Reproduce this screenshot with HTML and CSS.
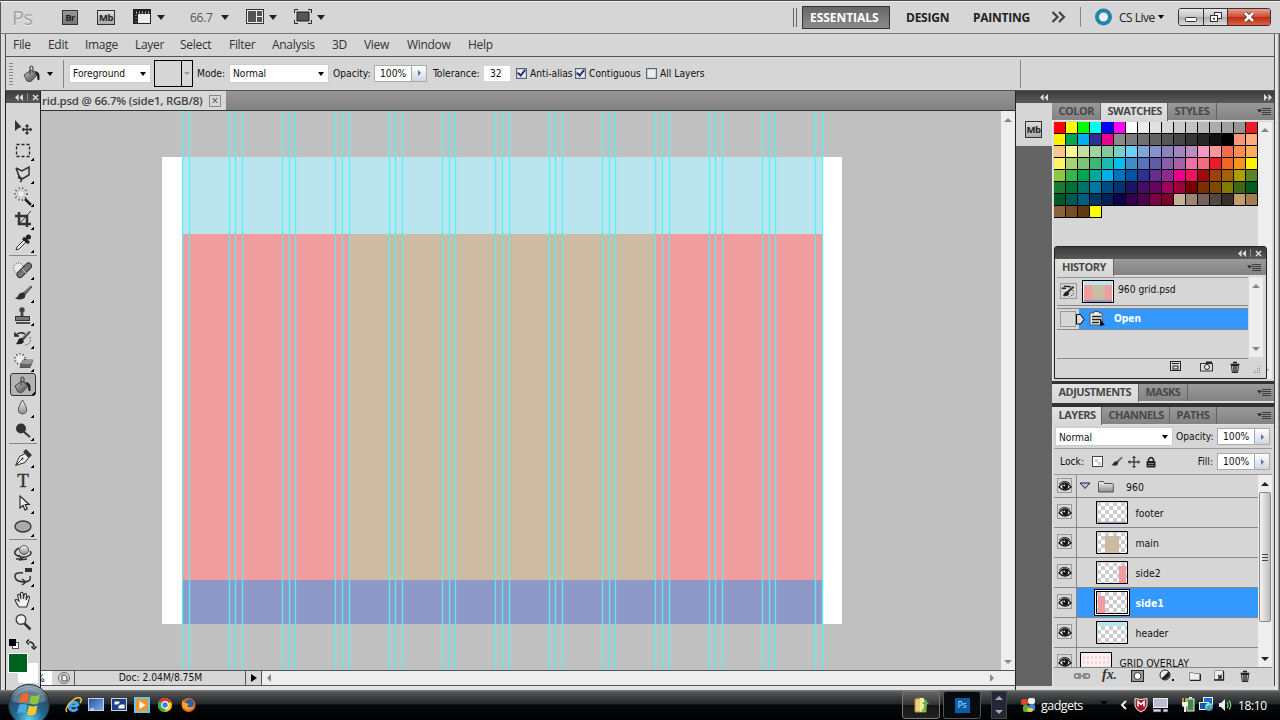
FILE: index.html
```html
<!DOCTYPE html>
<html lang="en">
<head>
<meta charset="utf-8">
<title>960 grid.psd</title>
<link rel="stylesheet" href="styles.css">
</head>
<body>
<svg class="defs" width="0" height="0">
  <defs>
    <linearGradient id="metal" x1="0" y1="0" x2="1" y2="1"><stop offset="0" stop-color="#c8c8c8"/><stop offset="1" stop-color="#444"/></linearGradient>
    <linearGradient id="lite" x1="0" y1="0" x2="0" y2="1"><stop offset="0" stop-color="#f4f4f4"/><stop offset="1" stop-color="#8c8c8c"/></linearGradient>
    <radialGradient id="orb" cx=".5" cy=".85" r=".8"><stop offset="0" stop-color="#5fd0ee"/><stop offset=".45" stop-color="#22658f"/><stop offset=".8" stop-color="#2b4b63"/><stop offset="1" stop-color="#8fa6b4"/></radialGradient>
    <radialGradient id="globe" cx=".4" cy=".3" r=".8"><stop offset="0" stop-color="#bff"/><stop offset="1" stop-color="#1668c8"/></radialGradient>
    <linearGradient id="screen" x1="0" y1="0" x2="1" y2="1"><stop offset="0" stop-color="#2a4f9c"/><stop offset="1" stop-color="#7db0ea"/></linearGradient>
    <pattern id="checker" width="8" height="8" patternUnits="userSpaceOnUse"><rect width="8" height="8" fill="#fff"/><path d="M0 0h4v4H0zM4 4h4v4H4z" fill="#ccc"/></pattern>
    <pattern id="dots" width="2" height="2" patternUnits="userSpaceOnUse"><rect width="1" height="1" fill="#888"/></pattern>
    <symbol id="bucket" viewBox="0 0 20 20"><path d="M2 11l7-5 6 5-6 6.500-4-.5z" fill="url(#metal)" stroke="#444"/><path d="M8 10V4q0-2 1.500-2T11 4v4" fill="none" stroke="#444" stroke-width="1.200"/><path d="M12 7q5 0 5.500 4.500v4q-1.500 1.500-2.200-.5L15 11z" fill="#222"/></symbol>
    <symbol id="brush" viewBox="0 0 20 20"><path d="M18 3l-8 7 2 2 7-8z" fill="#777" stroke="#333" stroke-width=".7"/><path d="M10.500 9.500q-4-.5-5 2.500-1 2.500-3.500 3.500 6.500 2 9.500-.5 1.500-1.500.5-4z" fill="#2e2e2e"/></symbol>
    <symbol id="eye" viewBox="0 0 14 12"><path d="M1 7q5.500-8 12 0Q7 13 1 7z" fill="#eee" stroke="#111" stroke-width="1.300"/><circle cx="7.200" cy="6.400" r="2.900" fill="#111"/><circle cx="6.300" cy="5.400" r=".9" fill="#ddd"/><path d="M1 4q5-5 11-.5" fill="none" stroke="#333" stroke-width="1"/></symbol>
    <symbol id="trash" viewBox="0 0 12 12"><path d="M2.500 4.500h7l-.8 7H3.300z" fill="#ccc" stroke="#222"/><path d="M1.500 3.500h9M4 1.500h4M5 5v6M7 5v6" stroke="#222" stroke-width="1.300"/></symbol>
    <symbol id="rewind" viewBox="0 0 8 7"><path d="M3.600 0v7L0 3.500zM8 0v7L4.400 3.500z" fill="#ddd"/></symbol>
    <symbol id="flyout" viewBox="0 0 14 9"><path d="M0 2.500h5L2.500 5.500z" fill="#222"/><path d="M5 1.500h9M5 3.500h9M5 5.500h9M5 7.500h9" stroke="#333" stroke-width=".9"/></symbol>
  </defs>
</svg>

<div class="screen">
  <header class="appbar">
    <span class="logo">Ps</span>
    <span class="badge badge-br">Br</span>
    <span class="badge badge-mb">Mb</span>
    <svg width="20" height="16"><rect x=".5" y=".5" width="17" height="14" fill="#eee" stroke="#222"/><path d="M1 1h16v4H5v10H1z" fill="#222"/><path d="M3 3.500h13" stroke="#bbb" stroke-dasharray="1 2" stroke-width="2"/><path d="M3 6v9" stroke="#bbb" stroke-dasharray="1 2"/></svg>
    <i class="caret"></i>
    <span class="zoomval">66.7</span>
    <i class="caret"></i>
    <svg width="20" height="16"><rect x=".5" y=".5" width="17" height="14" fill="#eee" stroke="#333"/><path d="M2 2h8v11H2zM11 2h5v5h-5zM11 8h5v5h-5z" fill="#555"/></svg>
    <i class="caret"></i>
    <svg width="20" height="16"><path d="M.5 4V.5H4M14 .5h3.500V4M17.500 11v3.500H14M4 14.500H.5V11" fill="none" stroke="#222"/><rect x="3" y="3" width="12" height="9" fill="#555" stroke="#222"/></svg>
    <i class="caret"></i>
    <i class="dblrule"></i>
    <b class="ws ws-on">ESSENTIALS</b>
    <b class="ws">DESIGN</b>
    <b class="ws">PAINTING</b>
    <svg width="16" height="12"><path d="M1.500 1l5 5-5 5M8 1l5 5-5 5" fill="none" stroke="#444" stroke-width="2.200"/></svg>
    <i class="rule"></i>
    <svg width="20" height="20"><circle cx="9.500" cy="10" r="6.500" fill="#e8f4f8" stroke="#2484ab" stroke-width="4"/></svg>
    <span class="cslive">CS Live</span>
    <i class="caret small"></i>
    <div class="winbtns">
      <span><svg width="14" height="12"><rect x="1.500" y="6.500" width="11" height="4" rx="1" fill="#fff" stroke="#333"/></svg></span>
      <span><svg width="14" height="12"><rect x="5.500" y="1.500" width="7" height="6" fill="#fff" stroke="#333"/><rect x="1.500" y="4.500" width="7" height="6" fill="#fff" stroke="#333"/><rect x="4" y="7" width="2" height="1.500" fill="#333"/></svg></span>
      <span class="close"><svg width="14" height="12"><path d="M3 2l8 8M11 2l-8 8" stroke="#633" stroke-width="4.500"/><path d="M3 2l8 8M11 2l-8 8" stroke="#fff" stroke-width="2.600"/></svg></span>
    </div>
  </header>

  <nav class="menubar">
    <span>File</span><span>Edit</span><span>Image</span><span>Layer</span><span>Select</span><span>Filter</span><span>Analysis</span><span>3D</span><span>View</span><span>Window</span><span>Help</span>
  </nav>

  <div class="options">
    <i class="vgrip"></i>
    <svg width="20" height="20"><use href="#bucket"/></svg>
    <i class="caret small"></i>
    <i class="rule"></i>
    <span class="select w80">Foreground<i class="caret small"></i></span>
    <span class="pattern"><i></i><em></em></span>
    <span>Mode:</span>
    <span class="select w98">Normal<i class="caret small"></i></span>
    <span>Opacity:</span>
    <span class="num">100%<i></i></span>
    <span>Tolerance:</span>
    <span class="field">32</span>
    <i class="check on"></i><span>Anti-alias</span>
    <i class="check on"></i><span>Contiguous</span>
    <i class="check"></i><span>All Layers</span>
    <i class="rule last"></i>
  </div>

  <main class="work">
    <aside class="tools">
      <div class="dark"><svg width="8" height="7"><use href="#rewind"/></svg><i></i><svg width="7" height="7"><path d="M1 1l5 5M6 1L1 6" stroke="#ddd" stroke-width="1.500"/></svg></div>
      <i class="hgrip"></i>
      <div class="toolset">
        <div class="tool nomore"><svg viewBox="0 0 20 20"><path d="M2 2v11l3-2.500L8.500 9z" fill="#333"/><path d="M14 7v9M9.500 11.500h9M12.500 8.500L14 7l1.500 1.500M12.500 14.500L14 16l1.500-1.500M11 10l-1.500 1.500L11 13M17 10l1.500 1.500L17 13" fill="none" stroke="#333" stroke-width="1.300"/></svg></div>
        <div class="tool"><svg viewBox="0 0 20 20"><rect x="3.500" y="3.500" width="13" height="12" fill="none" stroke="#222" stroke-width="1.300" stroke-dasharray="3 2"/></svg></div>
        <div class="tool"><svg viewBox="0 0 20 20"><path d="M3 4l6 3 7-4v8l-7 4-3-3-3-8M7 12q-3 1 0 2.500T7 18" fill="none" stroke="#333" stroke-width="1.500"/></svg></div>
        <div class="tool"><svg viewBox="0 0 20 20"><circle cx="8" cy="7" r="3.500" fill="#eee" stroke="#bbb"/><circle cx="8" cy="7" r="6" fill="none" stroke="#444" stroke-width="2" stroke-dasharray="1 2.600"/><path d="M12 12l6 6" stroke="#222" stroke-width="2.500"/></svg></div>
        <div class="tool"><svg viewBox="0 0 20 20"><path d="M2 6h12v11M6 2v12h12" fill="none" stroke="#333" stroke-width="2.500"/><path d="M7 13L18 1" stroke="#333"/></svg></div>
        <div class="tool"><svg viewBox="0 0 20 20"><path d="M3 17l1-3 7-7 2 2-7 7z" fill="#eee" stroke="#333"/><path d="M10 5l6 5M12 7l4-4" stroke="#222" stroke-width="3"/><circle cx="15.500" cy="4" r="2.500" fill="#222"/></svg></div>
        <hr>
        <div class="tool"><svg viewBox="0 0 20 20"><circle cx="5.500" cy="8" r="5" fill="#e8e8e8" stroke="#333" stroke-dasharray="1 1.500"/><path d="M7 14.500l8.500-8.500" stroke="#333" stroke-width="7" stroke-linecap="round"/><path d="M7 14.500l8.500-8.500" stroke="#777" stroke-width="5" stroke-linecap="round"/><path d="M9 9l4 4" stroke="#ccc"/></svg></div>
        <div class="tool"><svg viewBox="0 0 20 20"><use href="#brush"/></svg></div>
        <div class="tool"><svg viewBox="0 0 20 20"><circle cx="9" cy="4" r="2.700" fill="#444"/><path d="M8 5h2l.7 6H7.300z" fill="#444"/><rect x="2.500" y="10.500" width="14" height="4" fill="#777" stroke="#333"/><path d="M3 17h14" stroke="#222" stroke-width="1.500"/></svg></div>
        <div class="tool"><svg viewBox="0 0 20 20"><path d="M16 2L8 10l2 2 8-9z" fill="#555"/><path d="M9 9q-4 0-4 3l-2 3q6 1 8-2z" fill="#222"/><path d="M3 6q4-4 9-1M2 3.500V7h4" fill="none" stroke="#222" stroke-width="1.600"/><path d="M17 8q2 8-6 8" fill="none" stroke="#444" stroke-dasharray="1.500 1.500"/></svg></div>
        <div class="tool"><svg viewBox="0 0 20 20"><circle cx="7" cy="7" r="5" fill="#eee" stroke="#444" stroke-width="2" stroke-dasharray="1 2.200"/><path d="M10 8h10l-3 7.500H7z" fill="#666" stroke="#333" stroke-width=".7"/><path d="M10 8h10l-2 4H8.500z" fill="#999"/></svg></div>
        <div class="tool picked"><svg viewBox="0 0 20 20"><use href="#bucket"/></svg></div>
        <div class="tool"><svg viewBox="0 0 20 20"><path d="M9.500 2q-8.500 13 0 14 8.500-1 0-14z" fill="url(#lite)" stroke="#555"/></svg></div>
        <div class="tool"><svg viewBox="0 0 20 20"><circle cx="8" cy="7.500" r="5" fill="#333"/><path d="M11 11l6 5" stroke="#333" stroke-width="2"/></svg></div>
        <hr>
        <div class="tool"><svg viewBox="0 0 20 20"><path d="M2.500 17.500l4-9 6-3 3 4-3.500 5z" fill="#eee" stroke="#333"/><path d="M3 17l6-6" stroke="#333"/><circle cx="9.500" cy="10.500" r="1" fill="#222"/><path d="M11.500 2.500l6 6" stroke="#333" stroke-width="4"/></svg></div>
        <div class="tool type">T</div>
        <div class="tool"><svg viewBox="0 0 20 20"><path d="M7 2v12l3-2.500 2 4.500 2.200-1-2-4.500h4z" fill="#eee" stroke="#222" stroke-width="1.100"/></svg></div>
        <div class="tool"><svg viewBox="0 0 20 20"><ellipse cx="10" cy="9.500" rx="8" ry="5.500" fill="#aaa" stroke="#333" stroke-width="1.300"/></svg></div>
        <hr>
        <div class="tool"><svg viewBox="0 0 20 20"><path d="M6 4Q-2 9 5 12t12-1q2-2 0-4M3 15h6l-3-4M6 16l8-1" fill="none" stroke="#333" stroke-width="1.500"/><circle cx="11" cy="6" r="4.500" fill="url(#lite)" stroke="#555"/></svg></div>
        <div class="tool"><svg viewBox="0 0 20 20"><path d="M10 6Q1 5 2 10t10 5q7-1 5-6M9 12l4 3-4 3" fill="none" stroke="#333" stroke-width="1.500"/><path d="M12 1h7v4h-7z" fill="#333"/></svg></div>
        <div class="tool"><svg viewBox="0 0 20 20"><path d="M6 17q-3-4-4-7 1-1.500 4 1L4.500 5Q6 3.500 7 5l1 4-.5-6q1.500-1.500 2.500 0l.5 6 .8-5q1.500-1 2.200.5L13 10l2-4q1.500 0 1.500 1.500-1 5-3 9.500z" fill="#f2f2f2" stroke="#333" stroke-width="1.100"/></svg></div>
        <div class="tool nomore"><svg viewBox="0 0 20 20"><circle cx="8" cy="6.500" r="4.800" fill="#eee" stroke="#444" stroke-width="1.400"/><path d="M11.500 10.500l6 6" stroke="#333" stroke-width="2.500"/></svg></div>
      </div>
      <div class="minis"><svg width="10" height="10"><rect x="3.500" y="3.500" width="6" height="6" fill="#fff" stroke="#555"/><rect width="7" height="7" fill="#000"/></svg><svg width="11" height="11"><path d="M3 3q5 0 5 5M3 .5L.5 3 3 5.500M5.500 7.500L8 10l2.500-2.500" fill="none" stroke="#222" stroke-width="1.500"/></svg></div>
      <div class="colors"><i class="bg"></i><i class="fg"></i></div>
    </aside>

    <section class="doc">
      <div class="tabstrip"><div class="doctab"><span>rid.psd @ 66.7% (side1, RGB/8)</span><i>×</i></div></div>
      <div class="canvasrow">
        <svg class="canvas" width="960" height="559" viewBox="41 111 960 559">
          <rect x="41" y="111" width="960" height="559" fill="#c0c0c0"/>
          <rect x="162" y="157" width="680" height="467" fill="#fff"/>
          <rect x="182" y="157" width="641" height="77" fill="#bae5ee"/>
          <rect x="182" y="234" width="641" height="346" fill="#f19c9f"/>
          <rect x="349" y="234" width="306" height="346" fill="#cdbba3"/>
          <rect x="182" y="580" width="641" height="44" fill="#8e99c8"/>
          <g id="guides" fill="#50f2f4" fill-opacity=".95"></g>
        </svg>
        <div class="vscroll"><i class="up"></i><i class="down"></i></div>
      </div>
      <div class="status">
        <span class="pct">%</span>
        <svg width="12" height="12"><circle cx="6" cy="6" r="5.500" fill="#ddd" stroke="#666"/><path d="M4 3h3l2 2v4H4z" fill="#eee" stroke="#444"/></svg>
        <span class="docsize">Doc: 2.04M/8.75M</span>
        <span class="play"></span>
        <div class="hscroll"><i class="left"></i><i class="right"></i></div>
      </div>
    </section>

    <section class="dock">
      <div class="dark dockhead"><svg width="8" height="7"><use href="#rewind"/></svg><svg class="flip" width="8" height="7"><use href="#rewind"/></svg></div>
      <div class="dockbody">
        <div class="rail"><div class="railbox"><i class="hgrip"></i><span class="badge badge-mb">Mb</span></div></div>
        <div class="panels">
          <section class="panel colorpanel">
            <div class="tabs"><b>COLOR</b><b class="on">SWATCHES</b><b>STYLES</b><svg width="14" height="9"><use href="#flyout"/></svg></div>
            <div class="swatcharea"><div class="swatches" id="swatches"></div><div class="pscroll"><i class="up"></i><i class="down"></i></div></div>
          </section>
          <section class="panel adj">
            <div class="tabs"><b class="on">ADJUSTMENTS</b><b>MASKS</b><svg width="14" height="9"><use href="#flyout"/></svg></div>
          </section>
          <section class="panel layers">
            <div class="tabs"><b class="on">LAYERS</b><b>CHANNELS</b><b>PATHS</b><svg width="14" height="9"><use href="#flyout"/></svg></div>
            <div class="lrow blend"><span class="select">Normal<i class="caret small"></i></span><span class="lab">Opacity:</span><span class="num">100%<i></i></span></div>
            <div class="lrow lock"><span>Lock:</span>
              <svg width="12" height="12"><rect x=".5" y=".5" width="10" height="10" fill="#fff" stroke="#444"/><path d="M3 3h3v3H3zM6 6h3v3H6z" fill="#ccc"/></svg>
              <svg width="13" height="13"><use href="#brush"/></svg>
              <svg width="12" height="12"><path d="M6 .5v11M.5 6h11M4.500 2L6 .5 7.500 2M4.500 10L6 11.500 7.500 10M2 4.500L.5 6 2 7.500M10 4.500L11.500 6 10 7.500" fill="none" stroke="#111"/></svg>
              <svg width="10" height="12"><path d="M2.500 6V3.500q2.500-4 5 0V6" fill="none" stroke="#222" stroke-width="1.500"/><rect x=".5" y="5" width="9" height="6.500" rx="1" fill="#222"/><path d="M2 7.500h6M2 9.500h6" stroke="#777"/></svg>
              <span class="lab">Fill:</span><span class="num">100%<i></i></span></div>
            <div class="llist">
              <div class="lrows">
                <div class="layer group"><span class="eye"><svg width="14" height="12"><use href="#eye"/></svg></span><svg class="tri" width="12" height="8"><path d="M1 1h10L6 6.500z" fill="#b9b9f0" stroke="#223"/></svg><svg class="folder" width="16" height="13"><path d="M.5 12V2.500q0-1 1-1h4l1 2h8q.8 0 .8 1V12z" fill="url(#lite)" stroke="#555"/></svg><span>960</span></div>
                <div class="layer"><span class="eye"><svg width="14" height="12"><use href="#eye"/></svg></span><svg class="thumb" width="32" height="23"><rect x="1" y="1" width="30" height="21" fill="url(#checker)"/><path d="M1 20.500h28" stroke="#8e99c8" stroke-width="1.500"/></svg><span>footer</span></div>
                <div class="layer"><span class="eye"><svg width="14" height="12"><use href="#eye"/></svg></span><svg class="thumb" width="32" height="23"><rect x="1" y="1" width="30" height="21" fill="url(#checker)"/><rect x="8" y="4" width="14" height="17" fill="#cdbba3"/></svg><span>main</span></div>
                <div class="layer"><span class="eye"><svg width="14" height="12"><use href="#eye"/></svg></span><svg class="thumb" width="32" height="23"><rect x="1" y="1" width="30" height="21" fill="url(#checker)"/><rect x="22" y="4" width="7" height="17" fill="#f19c9f"/></svg><span>side2</span></div>
                <div class="layer active"><span class="eye"><svg width="14" height="12"><use href="#eye"/></svg></span><svg class="thumb" width="32" height="23"><rect x="0" y="0" width="30" height="21" fill="url(#checker)"/><rect x="1" y="4" width="7" height="17" fill="#f19c9f"/></svg><b>side1</b></div>
                <div class="layer"><span class="eye"><svg width="14" height="12"><use href="#eye"/></svg></span><svg class="thumb" width="32" height="23"><rect x="1" y="1" width="30" height="21" fill="url(#checker)"/><rect x="1" y="0" width="28" height="4" fill="#bae5ee"/></svg><span>header</span></div>
                <div class="layer base"><span class="eye"><svg width="14" height="12"><use href="#eye"/></svg></span><svg class="thumb" width="32" height="23"><rect width="30" height="21" fill="#fdf0ee"/><path d="M3 3v18M7 3v18M11 3v18M15 3v18M19 3v18M23 3v18M27 3v18" stroke="#eebcbc" stroke-dasharray="3 2"/></svg><span>GRID OVERLAY</span></div>
              </div>
              <div class="lscroll"><i class="up"></i><i class="knob"></i><i class="down"></i></div>
            </div>
            <div class="lfoot">
              <svg width="18" height="10"><path d="M8 3H3.500a2 2 0 000 4H8M10 3h4.500a2 2 0 010 4H10M5 5h8" fill="none" stroke="#777" stroke-width="1.400"/></svg>
              <span class="fx">fx<small>.</small></span>
              <svg width="14" height="12"><rect x=".5" y=".5" width="12" height="11" fill="#999" stroke="#222"/><circle cx="6.500" cy="6" r="3.500" fill="#fff" stroke="#333"/></svg>
              <svg width="16" height="13"><circle cx="6" cy="6" r="5" fill="#eee" stroke="#222"/><path d="M9.500 2.500a5 5 0 01-7 7z" fill="#222"/><path d="M13 10h2v2h-2z" fill="#111"/></svg>
              <svg width="12" height="10"><path d="M.5 9V1.500H4l1 1h5.500V9z" fill="#eee" stroke="#888"/><path d="M1 9.500h10.500V3" fill="none" stroke="#222"/></svg>
              <svg width="11" height="11"><path d="M.5.5h9v9h-9z" fill="#eee" stroke="#999"/><path d="M0 10h9.500V1M4 8h3V4.500M4 5l3 3" fill="none" stroke="#222" stroke-width="1.300"/></svg>
              <svg width="12" height="12"><use href="#trash"/></svg>
            </div>
          </section>
        </div>
      </div>
    </section>

    <section class="history">
      <div class="dark"><svg width="8" height="7"><use href="#rewind"/></svg><i></i><svg width="7" height="7"><path d="M1 1l5 5M6 1L1 6" stroke="#ddd" stroke-width="1.500"/></svg></div>
      <div class="tabs"><b class="on">HISTORY</b><svg width="14" height="9"><use href="#flyout"/></svg></div>
      <div class="hbody">
        <div class="hlist">
          <div class="snap"><span class="slot"><svg width="14" height="14" viewBox="0 0 20 20"><path d="M18 4L9 12" stroke="#333" stroke-width="3"/><path d="M10 11q-5-1-7 6 6 2 9-3z" fill="#222"/><path d="M1 6h6M4 3l10 1" stroke="#222" stroke-width="2" fill="none"/><path d="M17 9l1 6-6 3" stroke="#444" stroke-width="1.500" fill="none" stroke-dasharray="2 2"/></svg></span><svg width="32" height="23"><rect width="32" height="23" fill="#000"/><rect x="1" y="1" width="30" height="21" fill="#fff"/><rect x="2" y="1" width="28" height="4" fill="#bae5ee"/><rect x="2" y="5" width="28" height="15" fill="#f19c9f"/><rect x="10" y="5" width="13" height="15" fill="#cdbba3"/><rect x="2" y="20" width="28" height="2" fill="#8e99c8"/></svg><span class="snapname">960 grid.psd</span></div>
          <div class="state"><span class="slot"></span><div class="bar"><svg class="mark" width="9" height="11"><path d="M.5.5h4L8 5.500 4.500 10h-4z" fill="#ddd" stroke="#000"/></svg><svg width="17" height="16"><path d="M1 2h4V.5h5V2h3v12H1z" fill="#eee" stroke="#555"/><path d="M3 5.500h9M3 8.500h9M3 11.500h7" stroke="#222" stroke-width="1.300"/><path d="M11 8v7l5-1z" fill="#111"/></svg><b>Open</b></div></div>
        </div>
        <div class="pscroll"><i class="up"></i><i class="down"></i></div>
      </div>
      <div class="hfoot">
        <svg width="12" height="11"><rect x=".5" y=".5" width="10" height="9" fill="#ddd" stroke="#222"/><path d="M2 2.500h7" stroke="#222"/><rect x="3" y="5" width="5" height="3" fill="none" stroke="#222"/></svg>
        <svg width="14" height="11"><rect x=".5" y="2.500" width="12" height="7.500" fill="#ddd" stroke="#333"/><circle cx="7" cy="6" r="2.500" fill="#eee" stroke="#222"/><path d="M6 1.500h6" stroke="#222" stroke-width="2"/></svg>
        <svg width="12" height="12"><use href="#trash"/></svg>
        <svg class="grow" width="10" height="10"><path d="M10 0v10H0z" fill="url(#dots)"/></svg>
      </div>
    </section>
  </main>

  <footer class="taskbar">
    <svg class="orb" width="44" height="36"><circle cx="22" cy="21" r="20.500" fill="url(#orb)" stroke="#1a2b36"/><path d="M5 17a17.500 17.500 0 0134 0q-17 6-34 0z" fill="#fff" opacity=".25"/><path d="M14 11q4-3 8-1l-1.500 9q-4-2-8.500 0z" fill="#ef6a2a"/><path d="M24 11q4 2 9-.5L31 19.500q-4 2-8.500-.5z" fill="#8cc63e"/><path d="M12 21q4-2 8.500 0L18.500 29.500q-4-2-8.500.5z" fill="#4aa8e0"/><path d="M22 21.500q4 2 8.500 0L28.500 30q-4 2.500-8.500.5z" fill="#fbc92e"/></svg>
    <svg width="17" height="17"><path d="M13 9H4a4.500 4.500 0 008.300 2.500M4 9a4.700 4.700 0 019.200 0" fill="none" stroke="#43a7ee" stroke-width="3"/><path d="M2 15Q-1 12 6 5t10-3q1 1-1 4" fill="none" stroke="#f5c23c" stroke-width="1.500"/></svg>
    <svg width="17" height="14"><rect x=".5" y=".5" width="15" height="12" fill="url(#screen)" stroke="#c8d4e4"/><path d="M2 11h4" stroke="#fff"/></svg>
    <svg width="17" height="14"><rect x=".5" y=".5" width="15" height="12" fill="#1f3f86" stroke="#c8d4e4"/><path d="M3 3h6v4H3zM7 6h7v5H7z" fill="#fff" stroke="#1f3f86"/></svg>
    <svg width="17" height="16"><rect x="1" y="1" width="14" height="14" fill="#f4952a" stroke="#67c4ef" stroke-width="2"/><path d="M5.500 4v8l6-4z" fill="#fff"/></svg>
    <svg width="17" height="16"><circle cx="8" cy="8" r="7" fill="#f8c81c"/><path d="M8 8L1.900 4.500a7 7 0 0112.200 0z" fill="#e0392b"/><path d="M1.900 4.500a7 7 0 005.500 10.500L10 9z" fill="#3aa648"/><circle cx="8" cy="8" r="3.300" fill="#3c7fe0" stroke="#fff" stroke-width="1.200"/></svg>
    <svg width="17" height="16"><circle cx="8.500" cy="8" r="7" fill="#e66a12"/><circle cx="9.500" cy="6.500" r="4.300" fill="#2c5fae"/><path d="M2 2q0 3 4 4l3 1-2 2q3 3 6 0-1 4-5 4-5-1-6-6z" fill="#f6a42a"/></svg>
    <span class="tbtn t1"><svg width="18" height="18"><path d="M3 3l6-1v2h5v12l-11 0z" fill="#e8d27a" stroke="#a98f35"/><path d="M8 2h4v14H8z" fill="#f5e9a6"/><path d="M9 15q4-2 3-7h-2l3.500-4L17 8h-2q0 6-4 8z" fill="#55b848"/></svg></span>
    <span class="tbtn t2"><i>Ps</i></span>
    <span class="spin"><i class="up"></i><i class="down"></i></span>
    <svg class="gad" width="16" height="16"><rect x="1" y="2" width="7" height="6" rx="2" fill="#d9442e"/><rect x="8" y="1" width="7" height="6" rx="2" fill="#f0f0e8"/><rect x="3" y="8" width="6" height="7" rx="2" fill="#45b04a"/><rect x="9" y="7" width="6" height="7" rx="2" fill="#3f86e0"/><rect x="7" y="11" width="6" height="4" rx="2" fill="#f3cf35"/></svg>
    <span class="gt">gadgets</span>
    <i class="blk"></i>
    <svg class="chev" width="8" height="10"><path d="M6 1L2 5l4 4" fill="none" stroke="#eee" stroke-width="2"/></svg>
    <svg class="tr" width="14" height="16"><path d="M1 1.500l6 1 6-1V9q-1 4-6 6-5-2-6-6z" fill="#a8182b" stroke="#eee"/><path d="M4 9.500V4.500l3 3 3-3v5" fill="none" stroke="#fff" stroke-width="1.500"/></svg>
    <svg class="tr2" width="16" height="15"><rect x=".5" y=".5" width="14" height="9" fill="#bcbcd0" stroke="#eee"/><path d="M0 11h8v3H0zM10 11h5v3h-5z" fill="#ddd" stroke="#224" stroke-width=".7"/></svg>
    <svg class="tr3" width="15" height="16"><rect x="6" y="2" width="7" height="12" fill="#3f8a46" stroke="#eee"/><path d="M8 .5h3" stroke="#fff" stroke-width="2"/><path d="M1 5h6v3q-1 2-2 2v5H3v-5Q1 10 1 8z" fill="#eee"/><path d="M2 1v4M5 1v4" stroke="#e5b93c" stroke-width="1.500"/></svg>
    <svg class="tr4" width="16" height="16"><rect x="4.500" y=".5" width="9" height="7" fill="#1f6fc8" stroke="#dff"/><rect x=".5" y="5.500" width="9" height="7" fill="#1b56a8" stroke="#dff"/><circle cx="10" cy="10" r="4" fill="url(#globe)"/><path d="M8 9q2-2 3 0l1 2-3 2z" fill="#3cae4a"/></svg>
    <svg class="tr5" width="15" height="14"><path d="M1 5h2l4-4v12L3 9H1z" fill="#eee"/><path d="M9 4q2 3 0 6M11 2.500q3.500 4.500 0 9" fill="none" stroke="#6fd07a" stroke-width="1.300"/></svg>
    <span class="clock">18:10</span>
  </footer>
</div>
<script src="script.js"></script>
</body>
</html>
```
FILE: styles.css
```css
*{box-sizing:border-box}
body{margin:0;width:1280px;height:720px;overflow:hidden;background:#dcdcdc;font-family:"DejaVu Sans Condensed","DejaVu Sans",sans-serif;font-stretch:condensed;font-size:10.200px;color:#111}
.defs{position:absolute}
i,em{font-style:normal;display:block}
svg{display:block;flex:none}
.screen{width:1280px;height:720px;display:flex;flex-direction:column;background:linear-gradient(90deg,#555 1px,#e2e2e2 1px,#d4d4d4 5px,transparent 5px,transparent 1275px,#e8e8e8 1275px,#ddd 1278px,#555 1279px)}
.caret{width:0;height:0;border:4px solid transparent;border-top:5px solid #222;border-bottom:0}
.caret.small{border-width:4px 3.500px 0;border-top-color:#000}
.rule{width:1px;height:28px;background:#888}

.appbar{height:34px;flex:none;border-top:1px solid #4a464a;border-bottom:1px solid #777;background:#d6d6d6;box-shadow:inset 0 1px #eee,inset 1px 0 #555;display:grid;align-items:center;padding-left:12px;
grid-template-columns:50px 35px 36px 24px 33px 31px 25px 23px 25px 23px 24px 456px 93px 67px 94px 29px 14px 25px 39px 20px 93px}
.logo{font:20px "Open Sans",sans-serif;color:#a2a2a2;letter-spacing:-.5px;text-shadow:0 1px #eee}
.badge{display:block;width:16px;height:15px;border:1px solid #333;font:700 9.500px/13px "Open Sans",sans-serif;text-align:center;letter-spacing:-.5px;color:#222;background:linear-gradient(#999,#777)}
.badge-mb{width:18px;background:linear-gradient(#ddd,#aaa)}
.zoomval{font:12px "Open Sans",sans-serif;color:#555;letter-spacing:-.3px}
.dblrule{justify-self:end;width:4px;height:19px;border:solid #666;border-width:0 1px}
.ws{font:700 12px/21px "Open Sans",sans-serif;letter-spacing:-.25px;padding-left:16px;white-space:nowrap;color:#222}
.ws-on{color:#fff;background:linear-gradient(#666,#8c8c8c);border:1px solid #333;height:23px;width:88px;padding:0 0 0 7px;justify-self:end;letter-spacing:-.05px}
.appbar .rule{height:20px}
.cslive{font:12px "Open Sans",sans-serif;letter-spacing:-.5px;white-space:nowrap;color:#222}
.winbtns{display:flex;width:93px;height:18px;border:1px solid #333;border-radius:3px;overflow:hidden}
.winbtns span{width:25px;border-right:1px solid #333;background:linear-gradient(#e6e6e6,#c8c8c8 48%,#aaa 50%,#ddd);display:grid;place-items:center}
.winbtns .close{width:42px;border:0;background:linear-gradient(#e8a090,#cf4c38 48%,#b52a18 50%,#e06040)}

.menubar{margin:0 5px;height:23px;flex:none;border:solid #555;border-width:0 1px 1px;background:#d6d6d6;display:grid;grid-template-columns:35px 37px 50px 45px 49px 43px 60px 32px 43px 61px 60px;padding-left:7px;font:12px/21px "Open Sans",sans-serif;letter-spacing:-.3px;color:#333}

.options{margin:0 5px;height:34px;flex:none;border:solid #555;border-width:0 1px 1px;background:#d6d6d6;display:grid;align-items:center;padding-left:3px;white-space:nowrap;
grid-template-columns:13px 25px 16px 7px 84px 43px 33px 103px 41px 59px 51px 32px 14px 45px 14px 57px 14px 360px 2px}
.options>span,.options .check{position:relative;top:-.5px}
.vgrip{width:4px;height:24px;background:radial-gradient(#888 40%,transparent 50%) 0 0/2px 3px}
.select{background:#fff;height:17px;display:flex;align-items:center;justify-content:space-between;padding:1px 4px 0 3px;box-shadow:0 0 0 1px #ccc;flex:none}
.w80{width:80px}.w98{width:98px}
.pattern{width:39px;height:27px;border:1px solid #000;display:flex;align-items:center}
.pattern i{width:27px;height:25px;border-right:1px solid #000}
.pattern em{margin-left:2px;border:3px solid transparent;border-top-color:#999;border-bottom:0}
.num{width:53px;height:17px;display:flex;flex:none;background:#fff;border:1px solid #aaa;line-height:15px;padding-left:5px;justify-content:space-between}
.num i{width:15px;background:linear-gradient(#fff,#cfd6e2);border-left:1px solid #aaa;display:grid;place-items:center}
.num i::after{content:"";border:3px solid transparent;border-left-color:#57719c;border-right:0}
.field{width:26px;height:15px;background:#fff;padding-left:6px;line-height:15px}
.check{width:11px;height:11px;background:#eee;border:1px solid #567;box-shadow:inset 0 0 0 1px #ccc}
.check.on{display:grid;place-items:center}
.check.on::after{content:"";width:3px;height:6px;border:solid #23337c;border-width:0 2px 2px 0;transform:translateY(-1px) rotate(40deg)}

.work{height:599px;flex:none;margin:0 5px;display:grid;grid-template-columns:36px 975px 259px;position:relative}
.dark{height:12px;flex:none;background:linear-gradient(#3c3c3c,#5a5a5a);display:flex;align-items:center}
.tools{background:#d6d6d6;border-left:1px solid #222;border-right:1px solid #222;display:flex;flex-direction:column;height:599px}
.tools .dark{padding-left:9px;gap:4px}
.tools .dark i,.history .dark i{width:1px;height:8px;background:#888}
.hgrip{height:4px;margin:4px 4px 5px;background:radial-gradient(#888 40%,transparent 50%) 0 0/2px 2px}
.toolset{height:519px}
.tool{height:23px;display:grid;place-items:center;background:linear-gradient(135deg,transparent 50%,#000 51%) 25px 18px/3px 4px no-repeat}
.tool svg{width:20px;height:20px}
.tool.nomore{background:none}
.tool.picked{border:1px solid #333;border-radius:3px;margin:0 4px;background:linear-gradient(135deg,transparent 50%,#000 51%) 21px 17px/3px 4px no-repeat,#b4b4b4}
.type{font:19px "Liberation Serif",serif;-webkit-text-stroke:.4px #333;color:#333}
.tools hr{height:1px;border:0;background:#888;margin:1px 3px 2px}
.minis{display:flex;gap:7px;padding:4px 0 0 3px;height:17px}
.colors{position:relative;height:37px}
.fg{position:absolute;left:2px;top:1px;width:20px;height:20px;background:#006020;border:1px solid #fff}
.bg{position:absolute;left:12px;top:11px;width:20px;height:20px;background:#fff}

.doc{border-right:1px solid #222;background:#e4e4e4}
.tabstrip{height:20px;background:linear-gradient(#959595,#828282);border-bottom:1px solid #333}
.doctab{width:185px;height:19px;background:#d8d8d8;display:flex;align-items:center;padding:0 5px 0 1px;justify-content:space-between;font:600 11.500px "Open Sans",sans-serif;color:#444;white-space:nowrap}
.doctab span{letter-spacing:-.23px}
.doctab i{width:12px;height:12px;border:1px solid #888;text-align:center;font:12px/10px "Open Sans",sans-serif}
.canvasrow{display:flex;height:559px}
.vscroll,.pscroll,.lscroll{background:#eee;display:flex;flex-direction:column;justify-content:space-between;align-items:center}
.vscroll{width:14px;padding:7px 0 6px}
.up,.down{width:0;height:0;border:4px solid transparent}
.up{border-bottom:4px solid #888;border-top:0}
.down{border-top:4px solid #888;border-bottom:0}
.status{height:16px;display:flex;align-items:center;background:#d6d6d6;border:solid #555;border-width:1px 0}
.pct{width:17px;height:14px;background:linear-gradient(90deg,#fff 11px,#d6d6d6 11px);text-indent:-5px;overflow:hidden;line-height:16px}
.docsize{width:172px;height:14px;border:solid #555;border-width:0 1px;margin-left:4px;text-align:center;line-height:14px;padding-left:1px}
.play{width:6px;border:4px solid transparent;border-left:6px solid #000;border-right:0;margin:0 4px 0 5px}
.hscroll{flex:1;height:14px;background:#eee;border-left:1px solid #555;display:flex;justify-content:space-between;align-items:center;padding:0 21px 0 5px}
.left,.right{width:0;height:0;border:4px solid transparent}
.left{border-right-color:#888;border-left:0}.right{border-left-color:#888;border-right:0}

.dock{height:595px;display:flex;flex-direction:column;border-right:1px solid #444}
.dockhead{padding:0 2px 0 24px;justify-content:space-between}
.flip{transform:scaleX(-1)}
.dockbody{display:flex;flex:1}
.rail{width:36px;background:#646464}
.railbox{height:43px;background:#d6d6d6;padding-top:1px}
.railbox .badge{margin:9px 0 0 9px;width:17px;height:17px;line-height:16px}
.panels{flex:1;background:#333;display:flex;flex-direction:column;width:222px}
.panel{background:#d6d6d6;box-shadow:inset 1px 0 #e8e8e8}
.tabs{height:18px;flex:none;background:linear-gradient(#9a9a9a,#828282);border-bottom:1px solid #e2e2e2;display:flex;align-items:center;white-space:nowrap}
.tabs b{font:700 11px/15px "Open Sans",sans-serif;letter-spacing:-.5px;color:#484848;height:17px;border-right:1px solid #666;padding:0 6.500px}
.tabs b.on{background:linear-gradient(#e2e2e2,#d6d6d6);height:18px;line-height:16px}
.tabs svg{margin:0 3px 0 auto}
.colorpanel{height:278px}
.colorpanel .tabs b:nth-child(1){width:49px}.colorpanel .tabs b:nth-child(2){width:67px}.colorpanel .tabs b:nth-child(3){width:49px}
.swatcharea{display:flex;height:258px;padding:1px 0 0 2px;justify-content:space-between}
.swatches{display:grid;grid-template-columns:repeat(17,12px);grid-auto-rows:12px;height:96px;background:linear-gradient(#000,#000) 0 0/204px 84px no-repeat,linear-gradient(#000,#000) 0 0/48px 96px no-repeat}
.swatches i{margin:0 1px 1px 0}
.pscroll{width:14px;padding:6px 0;margin-right:2px}
.adj{height:19px;margin-top:3px}
.adj .tabs b:nth-child(1){width:87px}.adj .tabs b:nth-child(2){width:49px}
.layers{flex:1;margin-top:4px;display:flex;flex-direction:column;height:278px}
.layers .tabs b:nth-child(1){width:50px}.layers .tabs b:nth-child(2){width:68px}.layers .tabs b:nth-child(3){width:47px}
.lrow{display:flex;align-items:center;border-bottom:1px solid #999;margin:0 2px;flex:none}
.blend{height:24px;padding-left:2px}.blend .select{width:116px}
.lab{margin-left:4px;width:41px;text-align:right;padding-right:4px;flex:none}
.lock{height:26px;padding-left:6px}
.lock span:first-child{width:32px;flex:none}
.lock svg{margin-right:6px}
.lock svg:nth-of-type(3),.lock svg:nth-of-type(2){margin-left:-.5px}
.lock .lab{margin-left:0;width:55px}
.llist{height:193px;flex:none;display:flex;overflow:hidden;border-bottom:1px solid #888;margin:0 2px}
.lrows{width:204px}
.layer{height:30px;display:flex;align-items:center;position:relative;border-bottom:1px solid #888;font-size:10.400px;padding-left:42px;background:linear-gradient(#888,#888) 22px 0/1px 100% no-repeat}
.group{height:23px;padding-left:25px}
.group .eye{top:3px}
.group>span:last-child{margin-top:2px}
.eye{position:absolute;left:3px;top:6px;width:15px;height:15px;border:1px solid #999;display:grid;place-items:center}
.thumb{border:1px solid #000}
.thumb+span,.thumb+b{margin-left:7.500px}
.tri{margin-right:7px}.folder{margin-right:12px}
.active{color:#fff;background:linear-gradient(90deg,#d6d6d6 22px,#888 22px,#888 23px,#39f 23px)}
.active .thumb{outline:1px solid #fff;box-shadow:0 0 0 2px #000}
.base{padding-left:26px;align-items:flex-start;padding-top:4px;border:0}
.base span:last-child{margin-top:5px}
.lscroll{width:14px;padding:7px 0 6px}
.lscroll .up{border-bottom-color:#222}.lscroll .down{border-top-color:#222}
.lscroll .knob{width:12px;height:130px;background:linear-gradient(90deg,#f4f4f4,#bbb);border:1px solid #888;border-radius:2px;margin:6px 0 auto;display:grid;place-items:center}
.lscroll .knob::after{content:"";width:6px;height:7px;background:repeating-linear-gradient(#444 0 1px,transparent 1px 3px)}
.lfoot{display:flex;align-items:center;gap:14px;height:15px;padding-left:21px}
.lfoot svg:nth-last-child(-n+3){margin-left:-.5px}
.fx{font:italic 700 14px/14px "Liberation Serif",serif;margin-left:-3px;width:15px;color:#333}

.history{position:absolute;left:1049px;top:155px;width:213px;height:133px;background:#d6d6d6;border:1px solid #222;border-radius:3px 3px 0 0;display:flex;flex-direction:column}
.history .dark{justify-content:flex-end;gap:4px;padding-right:4px}
.history .tabs{height:17px}
.history .tabs b{width:59px;height:17px;padding-left:7px}
.history .tabs svg{margin-right:5px}
.hbody{display:flex;height:82px;margin:1px 3px 0 2px;justify-content:space-between}
.hlist{width:191px;border-bottom:1px solid #888}
.snap{height:29px;border-bottom:1px solid #888;border-top:1px solid #999;display:flex;align-items:flex-start;font-size:10.200px;padding-top:2px}
.slot{width:16px;height:16px;flex:none;border:1px solid #999;margin:0 3px}
.snap .slot{width:17px;margin:3px 5px 0 3px}
.snapname{margin:4px 0 0 4px}
.state{margin-top:2px;height:22px;border:solid #888;border-width:1px 0;display:flex;align-items:center}
.bar{flex:1;height:20px;background:#39f;color:#fff;display:flex;align-items:center;position:relative;padding-left:10px}
.bar b{margin:-2px 0 0 8px}
.mark{position:absolute;left:-3px;top:5px}
.history .pscroll{margin-right:0;height:80px;padding-top:7px}
.hfoot{display:flex;align-items:center;padding-left:115px;height:15px}
.hfoot svg:nth-child(2){margin-left:18px}.hfoot svg:nth-child(3){margin-left:15px}.grow{margin:4px 0 0 10px}

.taskbar{height:30px;flex:none;background:linear-gradient(#888 0,#555 2px,#3a3d40 8px,#24272a 14px,#04070a 15px,#000);display:grid;align-items:center;position:relative;
grid-template-columns:65px 23px 23px 23px 23px 23px 722px 41px 48px 29px 21px 59px 20px 14px 19px 28px 18px 19px 20px 42px}
.taskbar>*{grid-row:1}
.orb{position:absolute;left:7px;top:-6px;z-index:2}
.taskbar>:nth-child(2){grid-column:2}.taskbar>:nth-child(3){grid-column:3}.taskbar>:nth-child(4){grid-column:4}.taskbar>:nth-child(5){grid-column:5}.taskbar>:nth-child(6){grid-column:6}.taskbar>:nth-child(7){grid-column:7}
.tbtn{width:38px;height:28px;border:1px solid #777;border-radius:3px;background:linear-gradient(#666,#333 50%,#151515 51%,#222);display:grid;place-items:center}
.t1{grid-column:8}.t2{grid-column:9;background:#080b0e;border-color:#555}
.tbtn i{width:15px;height:15px;background:#0b5ca8;color:#bfe4ff;font:8.500px/14px "Open Sans",sans-serif;text-align:center}
.spin{grid-column:10;width:16px;height:28px;background:#222838;border:1px solid #444;display:flex;flex-direction:column;justify-content:space-between;align-items:center;padding:4px 0}
.spin .up{border-bottom-color:#aaa}.spin .down{border-top-color:#aaa}
.gad{grid-column:11}.gt{grid-column:12;color:#fff;font:12.500px "Open Sans",sans-serif;letter-spacing:-.55px}
.blk{grid-column:13;border:4px solid transparent;border-top:4px solid #000;border-bottom:0;width:8px;margin-top:-5px}
.chev{grid-column:14}.tr{grid-column:15}.tr2{grid-column:16}.tr3{grid-column:17}.tr4{grid-column:18}.tr5{grid-column:19}
.clock{grid-column:20;color:#fff;font:12px "Open Sans",sans-serif;letter-spacing:-.4px}
```
FILE: script.js
```js
const rows = [
  "ff0000 ffff00 00ff00 00ffff 0000ff ff00ff ffffff ebebeb e1e1e1 d7d7d7 cccccc c2c2c2 b7b7b7 acacac a0a0a0 959595 ed1c24",
  "fff200 00a651 00aeef 2e3192 ec008c 898989 7d7d7d 707070 626262 555555 464646 363636 262626 111111 000000 f7977a f9ad81",
  "fdc68a fff79a c4df9b a2d39c 82ca9d 7bcdc8 6ecff6 7ea7d8 8493ca 8882be a187be bc8dbf f49ac2 f6989d f26c4f f68e55 fbaf5c",
  "fff467 acd372 7cc576 3bb878 1abbb4 00bff3 438cca 5574b9 605ca8 855fa8 a763a8 f06ea9 f26d7d ed1c24 f26522 f7941d fff200",
  "8dc73f 39b54a 00a651 00a99d 00aeef 0072bc 0054a6 2e3192 662d91 92278f ec008c ed145b 9e0b0f a0410d a36209 aba000 598527",
  "1a7b30 007236 00746b 0076a3 004b80 003471 1b1464 440e62 630460 9e005d 9e0039 790000 7b2e00 7d4900 827b00 406618 005e20",
  "005826 005952 005b7f 003663 002157 0d004c 32004b 4b0049 7b0046 7a0026 c7b299 998675 736357 534741 37302d c69c6d a67c52",
  "8c6239 754c24 603913 ffff00"
];
const grid = document.getElementById("swatches");
rows.join(" ").split(" ").forEach(hex => {
  const cell = document.createElement("i");
  cell.style.background = "#" + hex;
  grid.appendChild(cell);
});

// Column guides, in canvas coordinates
const guides = [182,189,229,235,242,282,289,295,335,342,349,389,395,402,442,449,455,495,502,509,549,555,562,602,609,615,655,662,669,709,715,722,762,769,775,815,822];
const layer = document.getElementById("guides");
guides.forEach(x => {
  const line = document.createElementNS("http://www.w3.org/2000/svg", "rect");
  line.setAttribute("x", x - 0.15);
  line.setAttribute("y", 111);
  line.setAttribute("width", 1.3);
  line.setAttribute("height", 559);
  layer.appendChild(line);
});
```
